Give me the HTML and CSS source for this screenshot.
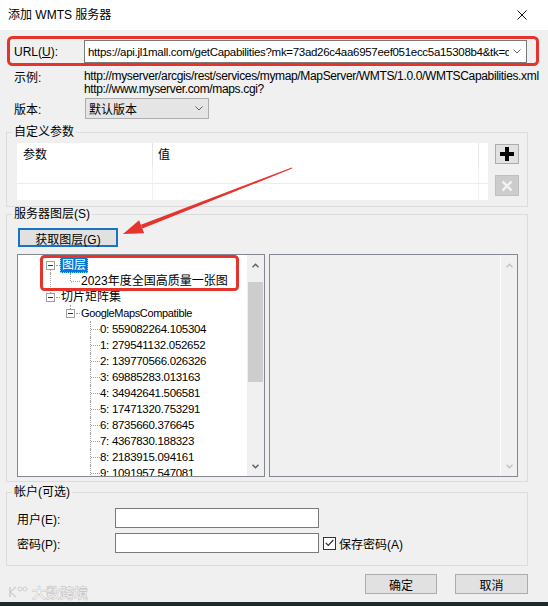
FILE: index.html
```html
<!DOCTYPE html>
<html>
  <head>
    <title>添加 WMTS 服务器</title>
    <link rel="stylesheet" href="styles.css">
  </head>

  <body>

    <div class="dialog">
      <div class="title-bar">
        <span class="title-text">添加 WMTS 服务器</span>
        <svg class="close-icon" width="10" height="10" viewBox="0 0 10 10">
          <path d="M0.5 0.5L9.5 9.5M9.5 0.5L0.5 9.5" stroke="#111" stroke-width="1"/>
        </svg>
      </div>

      <div class="dialog-body">

        <div class="form-row url-row">
          <span class="field-label">URL(<u>U</u>):</span>
          <div class="combo-box">
            <span class="combo-text">https://api.jl1mall.com/getCapabilities?mk=73ad26c4aa6957eef051ecc5a15308b4&amp;tk=d6b4f0c1</span>
            <svg class="chevron" width="8" height="5" viewBox="0 0 8 5">
              <path d="M0.5 0.5L4 4L7.5 0.5" fill="none" stroke="#606060" stroke-width="1"/>
            </svg>
          </div>
        </div>

        <div class="form-row example-row">
          <span class="field-label">示例:</span>
          <div class="example-text">
            <p>http://myserver/arcgis/rest/services/mymap/MapServer/WMTS/1.0.0/WMTSCapabilities.xml</p>
            <p>http://www.myserver.com/maps.cgi?</p>
          </div>
        </div>

        <div class="form-row version-row">
          <span class="field-label">版本:</span>
          <div class="select-box">
            <span>默认版本</span>
            <svg class="chevron" width="8" height="5" viewBox="0 0 8 5">
              <path d="M0.5 0.5L4 4L7.5 0.5" fill="none" stroke="#606060" stroke-width="1"/>
            </svg>
          </div>
        </div>

        <fieldset class="group params-group">
          <legend>自定义参数</legend>
          <div class="params-body">
            <div class="param-table">
              <div class="param-head">
                <div class="col-name">参数</div>
                <div class="col-value">值</div>
              </div>
              <div class="param-row">
                <div class="col-name"></div>
                <div class="col-value"></div>
              </div>
              <div class="param-row">
                <div class="col-name"></div>
                <div class="col-value"></div>
              </div>
            </div>
            <div class="param-buttons">
              <button class="icon-button">
                <svg width="14" height="14" viewBox="0 0 14 14">
                  <path d="M5 0h4v5h5v4h-5v5h-4v-5h-5v-4h5z" fill="#000"/>
                </svg>
              </button>
              <button class="icon-button disabled">
                <svg width="12" height="12" viewBox="0 0 12 12">
                  <path d="M1.5 1.5L10.5 10.5M10.5 1.5L1.5 10.5" stroke="#f2f2f2" stroke-width="2.5"/>
                </svg>
              </button>
            </div>
          </div>
        </fieldset>

        <fieldset class="group layers-group">
          <legend>服务器图层(S)</legend>
          <button class="push-button fetch-button">获取图层(G)</button>
          <div class="layer-panes">
            <div class="tree-view">
              <div class="tree-items">
                <div class="tree-row">
                  <span class="gutter line-down"><span class="expander"></span></span>
                  <span class="node-text selected">图层</span>
                </div>
                <div class="tree-row">
                  <span class="gutter line-through"></span>
                  <span class="gutter elbow"></span>
                  <span class="node-text">2023年度全国高质量一张图</span>
                </div>
                <div class="tree-row">
                  <span class="gutter line-up"><span class="expander"></span></span>
                  <span class="node-text">切片矩阵集</span>
                </div>
                <div class="tree-row">
                  <span class="gutter"></span>
                  <span class="gutter line-up"><span class="expander"></span></span>
                  <span class="node-text latin">GoogleMapsCompatible</span>
                </div>
                <div class="tree-row">
                  <span class="gutter"></span><span class="gutter"></span><span class="gutter tee"></span>
                  <span class="node-text num">0: 559082264.105304</span>
                </div>
                <div class="tree-row">
                  <span class="gutter"></span><span class="gutter"></span><span class="gutter tee"></span>
                  <span class="node-text num">1: 279541132.052652</span>
                </div>
                <div class="tree-row">
                  <span class="gutter"></span><span class="gutter"></span><span class="gutter tee"></span>
                  <span class="node-text num">2: 139770566.026326</span>
                </div>
                <div class="tree-row">
                  <span class="gutter"></span><span class="gutter"></span><span class="gutter tee"></span>
                  <span class="node-text num">3: 69885283.013163</span>
                </div>
                <div class="tree-row">
                  <span class="gutter"></span><span class="gutter"></span><span class="gutter tee"></span>
                  <span class="node-text num">4: 34942641.506581</span>
                </div>
                <div class="tree-row">
                  <span class="gutter"></span><span class="gutter"></span><span class="gutter tee"></span>
                  <span class="node-text num">5: 17471320.753291</span>
                </div>
                <div class="tree-row">
                  <span class="gutter"></span><span class="gutter"></span><span class="gutter tee"></span>
                  <span class="node-text num">6: 8735660.376645</span>
                </div>
                <div class="tree-row">
                  <span class="gutter"></span><span class="gutter"></span><span class="gutter tee"></span>
                  <span class="node-text num">7: 4367830.188323</span>
                </div>
                <div class="tree-row">
                  <span class="gutter"></span><span class="gutter"></span><span class="gutter tee"></span>
                  <span class="node-text num">8: 2183915.094161</span>
                </div>
                <div class="tree-row">
                  <span class="gutter"></span><span class="gutter"></span><span class="gutter tee"></span>
                  <span class="node-text num">9: 1091957.547081</span>
                </div>
              </div>
              <div class="scrollbar">
                <div class="scroll-arrow">
                  <svg width="7" height="5" viewBox="0 0 7 5"><path d="M0.5 4.2L3.5 1.2L6.5 4.2" fill="none" stroke="#606060" stroke-width="1.5"/></svg>
                </div>
                <div class="scroll-track"><div class="scroll-thumb"></div></div>
                <div class="scroll-arrow">
                  <svg width="7" height="5" viewBox="0 0 7 5"><path d="M0.5 0.8L3.5 3.8L6.5 0.8" fill="none" stroke="#606060" stroke-width="1.5"/></svg>
                </div>
              </div>
            </div>
            <div class="props-pane">
              <div class="props-space"></div>
              <div class="scrollbar disabled">
                <div class="scroll-arrow">
                  <svg width="7" height="5" viewBox="0 0 7 5"><path d="M0.5 4.2L3.5 1.2L6.5 4.2" fill="none" stroke="#c3c3c3" stroke-width="1.5"/></svg>
                </div>
                <div class="scroll-track"></div>
                <div class="scroll-arrow">
                  <svg width="7" height="5" viewBox="0 0 7 5"><path d="M0.5 0.8L3.5 3.8L6.5 0.8" fill="none" stroke="#c3c3c3" stroke-width="1.5"/></svg>
                </div>
              </div>
            </div>
          </div>
        </fieldset>

        <fieldset class="group account-group">
          <legend>帐户(可选)</legend>
          <div class="account-row">
            <span class="account-label">用户(E):</span>
            <div class="text-input"></div>
          </div>
          <div class="account-row">
            <span class="account-label">密码(P):</span>
            <div class="text-input"></div>
            <label class="check">
              <span class="check-box">
                <svg width="9" height="8" viewBox="0 0 9 8"><path d="M0.8 4L3.3 6.5L8.3 1" fill="none" stroke="#333" stroke-width="1.2"/></svg>
              </span>
              保存密码(A)
            </label>
          </div>
        </fieldset>

        <div class="dialog-buttons">
          <button class="push-button ok-button">确定</button>
          <button class="push-button cancel-button">取消</button>
        </div>

      </div>

      <!-- faint watermark in the corner -->
      <div class="watermark">
        <svg width="22" height="14" viewBox="0 0 22 14">
          <path d="M3 2v10M3 7l6-5M3 7l6 5" fill="none" stroke="#cfcfcf" stroke-width="1.6"/>
          <circle cx="13" cy="4" r="2" fill="none" stroke="#cfcfcf" stroke-width="1"/>
          <circle cx="18" cy="4" r="2" fill="none" stroke="#cfcfcf" stroke-width="1"/>
        </svg>
        <span>大数跨境</span>
      </div>

      <!-- red markup drawn on top of the screenshot -->
      <svg class="annotations" width="548" height="606" viewBox="0 0 548 606">
        <rect x="8.5" y="37.5" width="529" height="27" rx="4" fill="none" stroke="#e5342b" stroke-width="3"/>
        <rect x="41.5" y="256.5" width="196" height="33" rx="3" fill="none" stroke="#e5342b" stroke-width="3"/>
        <polygon points="292.2,168.6 291.8,167.4 140.9,224.8 142.3,228.6" fill="#e5342b"/>
        <polygon points="123,234 139.1,220.2 144.1,233.2" fill="#e5342b"/>
      </svg>
    </div>

  </body>
</html>
```

FILE: styles.css
```css
*{
  box-sizing: border-box;
}
body{
  margin: 0;
  background-color: #1d2a2b;
  font-family: "Liberation Sans", "Noto Sans CJK SC", sans-serif;
  font-size: 12px;
  color: #000;
}
p{
  margin: 0;
}
button{
  font: inherit;
  color: #000;
  padding: 0;
}
.dialog{
  position: relative;
  width: 548px;
  height: 602px;
  background-color: #f0f0f0;
  overflow: hidden;
}
.title-bar{
  display: flex;
  align-items: center;
  justify-content: space-between;
  height: 30px;
  padding: 0 21px 0 8px;
  background-color: #fff;
}
.title-text{
  line-height: 16px;
}
.close-icon{
  display: block;
}

/* top form */
.form-row{
  display: flex;
  padding-left: 14px;
}
.field-label{
  width: 70px;
  flex: none;
}
.url-row{
  margin-top: 10px;
  height: 23px;
  align-items: center;
}
.combo-box{
  display: flex;
  align-items: center;
  width: 443px;
  height: 23px;
  padding: 0 5px 0 3px;
  border: 1px solid #7a7a7a;
  background-color: #fff;
}
.combo-text{
  flex: 1;
  overflow: hidden;
  white-space: nowrap;
  font-size: 11.5px;
  letter-spacing: -0.3px;
}
.chevron{
  flex: none;
  margin-left: 4px;
}
.example-row{
  margin-top: 7px;
  line-height: 13px;
  align-items: flex-start;
}
.example-row .field-label{
  padding-top: 2px;
}
.example-text{
  letter-spacing: -0.35px;
}
.version-row{
  margin-top: 2px;
  align-items: center;
}
.select-box{
  display: flex;
  align-items: center;
  justify-content: space-between;
  width: 124px;
  height: 21px;
  margin-left: 1px;
  padding: 0 5px 0 3px;
  border: 1px solid #adadad;
  background-color: #e5e5e5;
}

/* group boxes */
.group{
  min-width: 0;
  margin: 0 20px 0 6px;
  padding: 0 8px 6px 10px;
  border: 1px solid #dcdcdc;
}
.group legend{
  margin-left: -5px;
  padding: 0 2px;
  line-height: 16px;
}
.params-group{
  margin-top: 5px;
}
.params-body{
  display: flex;
  gap: 7px;
  margin-top: 3px;
}
.param-table{
  width: 471px;
  height: 57px;
  background-color: #fff;
}
.param-head{
  display: flex;
  height: 24px;
  line-height: 24px;
}
.param-row{
  display: flex;
  height: 16px;
}
.param-head + .param-row{
  height: 17px;
  border-bottom: 1px solid #ececec;
}
.col-name{
  width: 136px;
  padding-left: 6px;
  border-right: 1px solid #e5e5e5;
}
.col-value{
  width: 326px;
  padding-left: 5px;
  border-right: 1px solid #e5e5e5;
}
.param-row .col-name,
.param-row .col-value{
  border-right-color: #f2f2f2;
}
.param-buttons{
  display: flex;
  flex-direction: column;
  gap: 11px;
  margin-top: 1px;
}
.icon-button{
  display: flex;
  align-items: center;
  justify-content: center;
  width: 24px;
  height: 20px;
  border: 1px solid #adadad;
  background-color: #e1e1e1;
}
.icon-button.disabled{
  height: 21px;
  border-color: #bfbfbf;
  background-color: #cccccc;
}

.layers-group{
  margin-top: -1px;
  padding-bottom: 4px;
}
.push-button{
  height: 20px;
  border: 1px solid #adadad;
  background-color: #e1e1e1;
}
.fetch-button{
  display: block;
  width: 100px;
  height: 19px;
  margin: 6px 0 0 1px;
  border: 2px solid #1a73c0;
}
.layer-panes{
  display: flex;
  gap: 4px;
  margin-top: 7px;
}
.tree-view{
  display: flex;
  width: 248px;
  height: 223px;
  border: 1px solid #828790;
  background-color: #fff;
}
.tree-items{
  flex: 1;
  overflow: hidden;
  padding: 2px 0 0 22px;
}
.tree-row{
  display: flex;
  height: 16px;
  white-space: nowrap;
}
.gutter{
  position: relative;
  flex: none;
  width: 20px;
  height: 16px;
}
.gutter::before,
.gutter::after{
  content: "";
  position: absolute;
}
.line-through::before{
  left: 10px;
  top: 0;
  height: 16px;
  border-left: 1px dotted #a0a0a0;
}
.line-down::before{
  left: 10px;
  top: 13px;
  height: 3px;
  border-left: 1px dotted #a0a0a0;
}
.line-up::before{
  left: 10px;
  top: 0;
  height: 4px;
  border-left: 1px dotted #a0a0a0;
}
.line-down::after,
.line-up::after{
  left: 16px;
  top: 8px;
  width: 4px;
  border-top: 1px dotted #a0a0a0;
}
.elbow::before{
  left: 10px;
  top: 0;
  height: 8px;
  border-left: 1px dotted #a0a0a0;
}
.elbow::after,
.tee::after{
  left: 11px;
  top: 8px;
  width: 9px;
  border-top: 1px dotted #a0a0a0;
}
.tee::before{
  left: 10px;
  top: 0;
  height: 16px;
  border-left: 1px dotted #a0a0a0;
}
.expander{
  position: absolute;
  left: 6px;
  top: 4px;
  width: 9px;
  height: 9px;
  border: 1px solid #a0a0a0;
  background-color: #fff;
}
.expander::after{
  content: "";
  position: absolute;
  left: 1px;
  top: 3px;
  width: 5px;
  border-top: 1px solid #333;
}
.node-text{
  padding: 0 2px 0 1px;
  line-height: 16px;
}
.node-text.latin{
  font-size: 11px;
  letter-spacing: -0.35px;
}
.node-text.num{
  padding-left: 0;
  font-size: 11.5px;
  letter-spacing: -0.3px;
}
.node-text.selected{
  padding: 0 2px;
  color: #fff;
  background-color: #0078d7;
  outline: 1px dotted #9cc9ef;
  outline-offset: -1px;
}
.scrollbar{
  display: flex;
  flex-direction: column;
  flex: none;
  width: 17px;
  background-color: #f0f0f0;
}
.scroll-arrow{
  display: flex;
  align-items: center;
  justify-content: center;
  height: 20px;
}
.scroll-track{
  flex: 1;
}
.scroll-thumb{
  height: 100px;
  margin: 7px 1px 0;
  background-color: #cdcdcd;
}
.props-pane{
  display: flex;
  width: 249px;
  height: 223px;
  border: 1px solid #828790;
  background-color: #f0f0f0;
}
.props-space{
  flex: 1;
}
.scrollbar.disabled{
  border-left: 1px solid #fbfbfb;
}

.account-group{
  margin-top: 2px;
  padding-bottom: 12px;
}
.account-row{
  display: flex;
  align-items: center;
  height: 20px;
  margin-top: 8px;
}
.account-row + .account-row{
  margin-top: 5px;
}
.account-label{
  width: 98px;
  flex: none;
}
.text-input{
  width: 204px;
  height: 20px;
  border: 1px solid #7a7a7a;
  background-color: #fff;
}
.check{
  display: flex;
  align-items: center;
  gap: 3px;
  margin-left: 4px;
}
.check-box{
  display: flex;
  align-items: center;
  justify-content: center;
  width: 13px;
  height: 13px;
  border: 1px solid #333;
  background-color: #fff;
}

.dialog-buttons{
  display: flex;
  justify-content: flex-end;
  gap: 18px;
  margin-top: 8px;
  padding-right: 20px;
}
.ok-button{
  width: 72px;
}
.cancel-button{
  width: 73px;
}

.watermark{
  position: absolute;
  left: 7px;
  top: 582px;
  display: flex;
  align-items: center;
  gap: 3px;
  font-size: 14px;
  font-weight: bold;
  color: #f6f6f6;
  -webkit-text-stroke: 0.6px #c9c9c9;
}
.annotations{
  position: absolute;
  left: 0;
  top: 0;
  pointer-events: none;
}
```
